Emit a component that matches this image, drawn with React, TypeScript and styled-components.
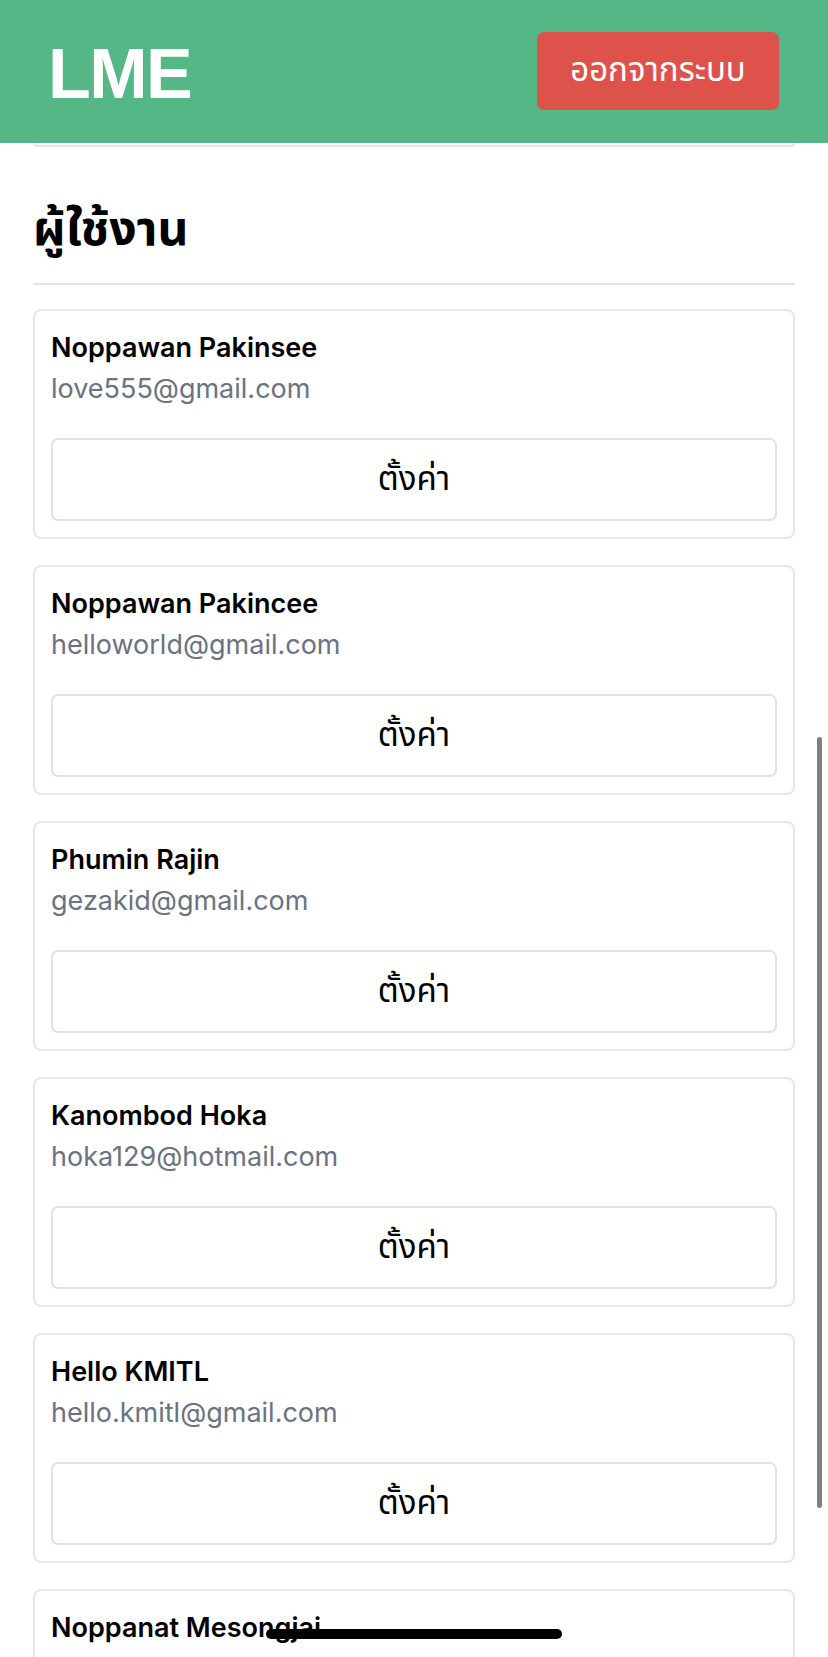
import React from "react";
import styled, { createGlobalStyle } from "styled-components";

type User = {
  name: string;
  email: string;
};

const users: User[] = [
  { name: "Noppawan Pakinsee", email: "love555@gmail.com" },
  { name: "Noppawan Pakincee", email: "helloworld@gmail.com" },
  { name: "Phumin Rajin", email: "gezakid@gmail.com" },
  { name: "Kanombod Hoka", email: "hoka129@hotmail.com" },
  { name: "Hello KMITL", email: "hello.kmitl@gmail.com" },
  { name: "Noppanat Mesongjai", email: "noppanat.m@gmail.com" },
];

const App = () => {
  return (
    <>
      <GlobalStyle />
      <Header>
        <Logo>LME</Logo>
        <LogoutButton type="button">ออกจากระบบ</LogoutButton>
      </Header>
      <Main>
        <PeekCard />
        <Title>ผู้ใช้งาน</Title>
        <Divider />
        <CardList>
          {users.map((user) => (
            <Card key={user.email}>
              <Name>{user.name}</Name>
              <Email>{user.email}</Email>
              <SettingsButton type="button">ตั้งค่า</SettingsButton>
            </Card>
          ))}
        </CardList>
      </Main>
      <ScrollThumb />
      <HomeIndicator />
    </>
  );
};

const GlobalStyle = createGlobalStyle`
  html, body {
    margin: 0;
    padding: 0;
    background: #ffffff;
    height: 1657px;
    overflow: hidden;
  }
  body {
    font-family: Inter, "Noto Sans", "Noto Sans Thai", "DejaVu Sans", sans-serif;
    color: #000000;
  }
  * {
    box-sizing: border-box;
  }
`;

const Header = styled.header`
  height: 143px;
  background: #55b786;
  display: flex;
  align-items: center;
  justify-content: space-between;
  padding: 0 49px 0 48px;
`;

const Logo = styled.div`
  font-family: "Liberation Sans", Arial, sans-serif;
  font-weight: 700;
  font-size: 70px;
  letter-spacing: -1.5px;
  color: #ffffff;
  line-height: 1;
  margin-top: 4px;
`;

const LogoutButton = styled.button`
  width: 242px;
  height: 78px;
  background: #de524c;
  border: none;
  border-radius: 7px;
  color: #ffffff;
  font-family: inherit;
  font-size: 33px;
  padding: 0;
  margin-top: -2px;
`;

const Main = styled.main`
  padding: 0 33px;
`;

const PeekCard = styled.div`
  height: 4px;
  border: 2px solid #e6e6e6;
  border-top: none;
  border-radius: 0 0 8px 8px;
`;

const Title = styled.h1`
  margin: 53px 0 0;
  font-size: 48px;
  font-weight: 700;
  line-height: 56px;
`;

const Divider = styled.hr`
  margin: 27px 0 0;
  border: none;
  height: 2px;
  background: #e4e4e4;
`;

const CardList = styled.div`
  display: flex;
  flex-direction: column;
  gap: 26px;
  margin-top: 24px;
`;

const Card = styled.section`
  border: 2px solid #e6e6e6;
  border-radius: 8px;
  padding: 20px 16px 16px 16px;
  display: flex;
  flex-direction: column;
`;

const Name = styled.div`
  font-size: 27px;
  font-weight: 600;
  line-height: 34px;
`;

const Email = styled.div`
  margin-top: 7px;
  font-size: 27px;
  line-height: 34px;
  color: #6b7280;
`;

const SettingsButton = styled.button`
  margin-top: 32px;
  height: 83px;
  width: 100%;
  background: #ffffff;
  border: 2px solid #e2e2e2;
  border-radius: 7px;
  font-family: inherit;
  font-size: 33px;
  color: #000000;
  padding: 0;
`;

const ScrollThumb = styled.div`
  position: fixed;
  left: 817px;
  top: 737px;
  width: 5px;
  height: 771px;
  border-radius: 3px;
  background: #7f7f7f;
`;

const HomeIndicator = styled.div`
  position: fixed;
  left: 266px;
  top: 1629px;
  width: 296px;
  height: 10px;
  border-radius: 5px;
  background: #000000;
`;

export default App;
